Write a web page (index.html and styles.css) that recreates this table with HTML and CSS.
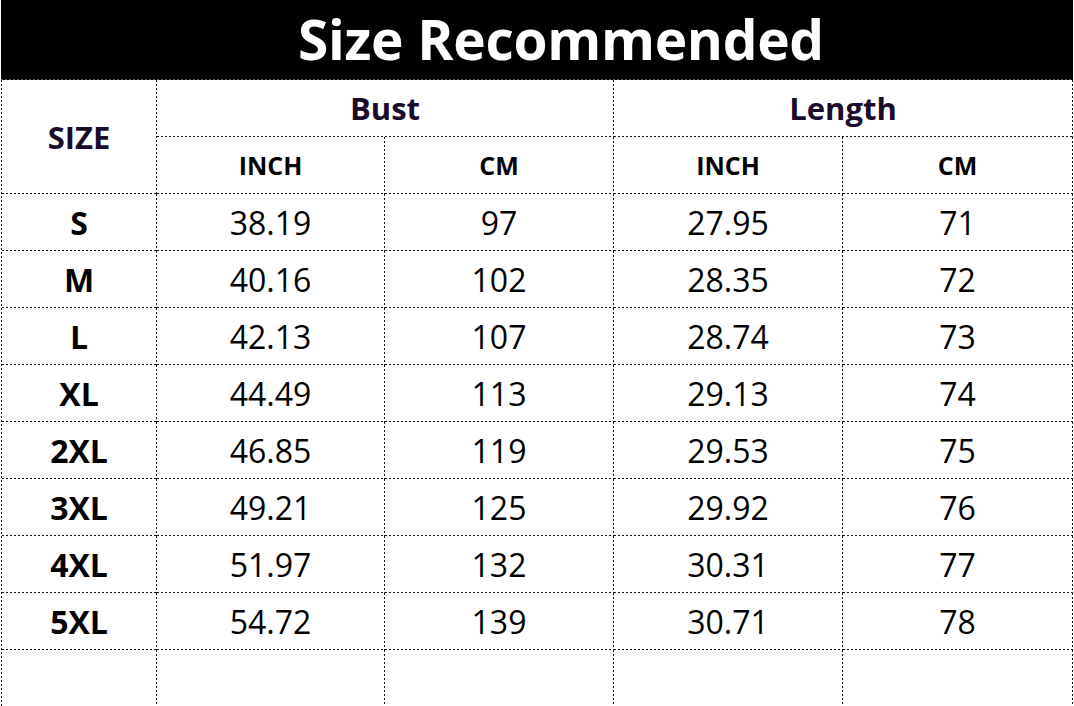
FILE: index.html
```html
<!DOCTYPE html>
<html lang="en">
<head>
<meta charset="utf-8">
<title>Size Recommended</title>
<link rel="stylesheet" href="styles.css">
</head>
<body>
<div class="sheet">
  <div class="title">Size Recommended</div>

  <div class="cell head size-head">SIZE</div>
  <div class="cell head group">Bust</div>
  <div class="cell head group">Length</div>

  <div class="cell unit">INCH</div>
  <div class="cell unit">CM</div>
  <div class="cell unit">INCH</div>
  <div class="cell unit">CM</div>

  <div class="cell label">S</div><div class="cell num">38.19</div><div class="cell num">97</div><div class="cell num">27.95</div><div class="cell num">71</div>
  <div class="cell label">M</div><div class="cell num">40.16</div><div class="cell num">102</div><div class="cell num">28.35</div><div class="cell num">72</div>
  <div class="cell label">L</div><div class="cell num">42.13</div><div class="cell num">107</div><div class="cell num">28.74</div><div class="cell num">73</div>
  <div class="cell label">XL</div><div class="cell num">44.49</div><div class="cell num">113</div><div class="cell num">29.13</div><div class="cell num">74</div>
  <div class="cell label">2XL</div><div class="cell num">46.85</div><div class="cell num">119</div><div class="cell num">29.53</div><div class="cell num">75</div>
  <div class="cell label">3XL</div><div class="cell num">49.21</div><div class="cell num">125</div><div class="cell num">29.92</div><div class="cell num">76</div>
  <div class="cell label">4XL</div><div class="cell num">51.97</div><div class="cell num">132</div><div class="cell num">30.31</div><div class="cell num">77</div>
  <div class="cell label">5XL</div><div class="cell num">54.72</div><div class="cell num">139</div><div class="cell num">30.71</div><div class="cell num">78</div>
  <div class="cell"></div><div class="cell"></div><div class="cell"></div><div class="cell"></div><div class="cell"></div>
</div>
</body>
</html>
```

FILE: styles.css
```css
html, body {
  margin: 0;
  padding: 0;
  background: #fff;
  overflow: hidden;
  height: 706px;
}

body {
  font-family: "Open Sans", "Noto Sans", "Liberation Sans", sans-serif;
  color: #000;
}

.sheet {
  margin-left: 1px;
  padding-left: 1px;
  width: 1071px;
  display: grid;
  grid-template-columns: 155px 228px 229px 229px 230px;
  grid-template-rows: 80px;
  grid-auto-rows: 57px;
  background: linear-gradient(to bottom, #111 2px, transparent 2px) left top / 1px 4px repeat-y;
}

.title {
  grid-column: 1 / -1;
  margin-left: -1px;
  background:
    linear-gradient(to right, #5a5a5a 2px, transparent 2px) left bottom / 4px 1px repeat-x,
    #000;
  color: #fff;
  font-weight: 700;
  font-size: 55px;
  line-height: 78px;
  text-align: center;
  padding-left: 48px;
  letter-spacing: -0.3px;
}

.cell {
  display: flex;
  align-items: center;
  justify-content: center;
  padding: 0 1px 1px 0;
  background:
    linear-gradient(to right, #111 2px, transparent 2px) left bottom / 4px 1px repeat-x,
    linear-gradient(to bottom, #111 2px, transparent 2px) right top / 1px 4px repeat-y;
}

.head {
  font-weight: 700;
  font-size: 31px;
  color: #1a0b2c;
}

.size-head {
  grid-row: span 2;
}

.group {
  grid-column: span 2;
}

.unit {
  font-weight: 700;
  font-size: 25px;
}

.label {
  font-weight: 700;
  font-size: 32px;
}

.num {
  font-size: 32px;
}
```
